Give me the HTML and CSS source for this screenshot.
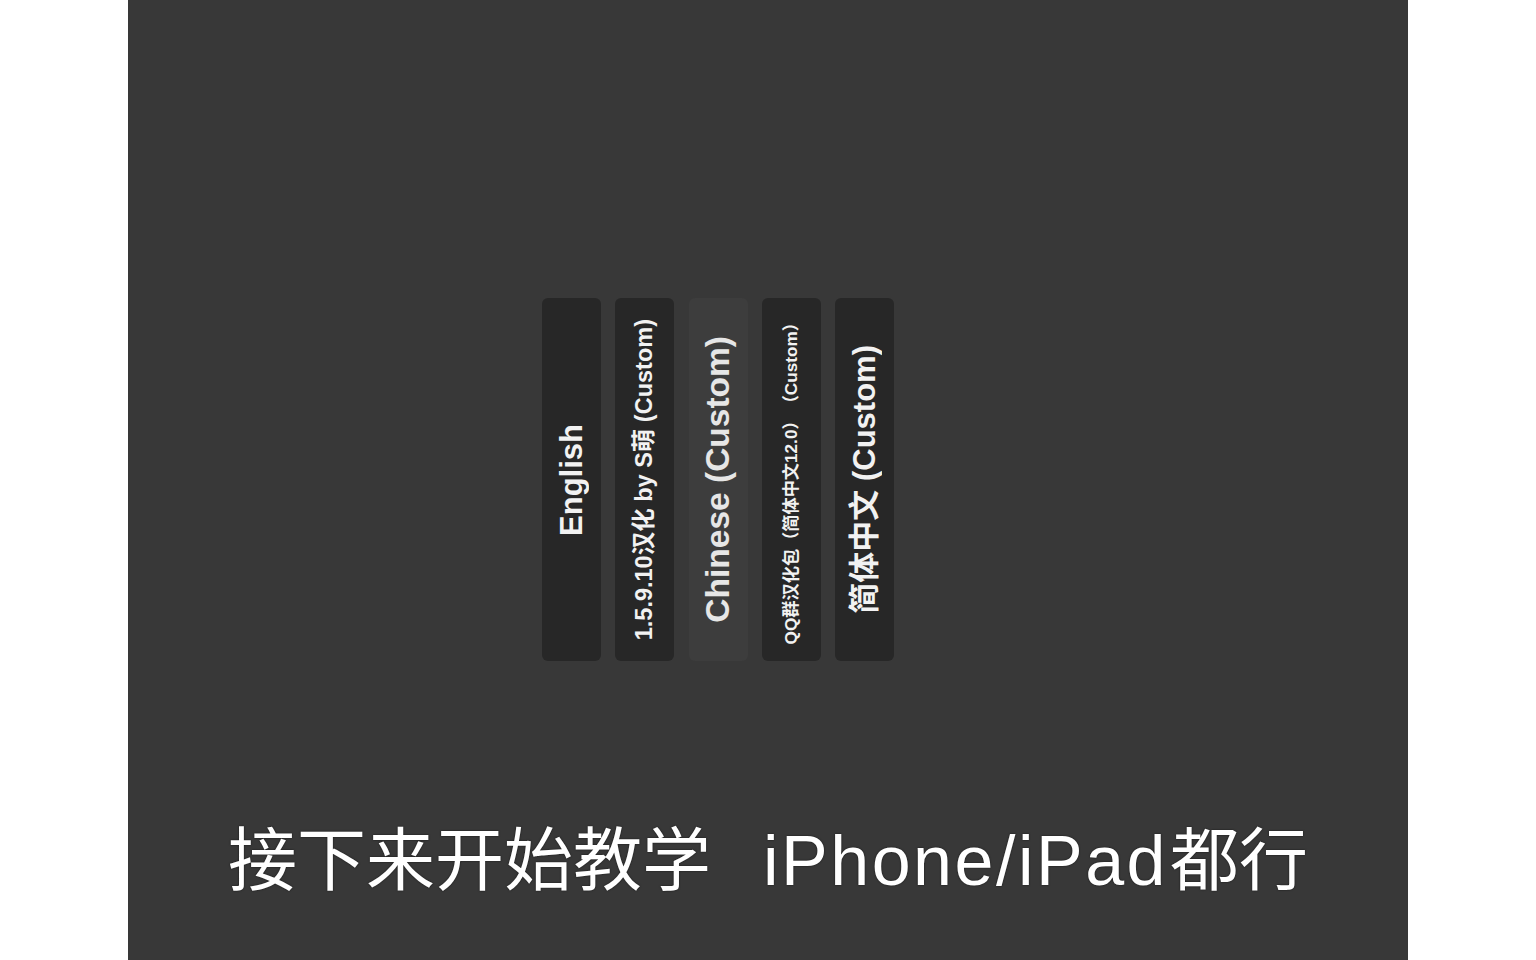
FILE: index.html
```html
<!DOCTYPE html>
<html lang="zh">
<head>
<meta charset="utf-8">
<title>Language</title>
<link rel="stylesheet" href="styles.css">
</head>
<body>
<div class="stage">
  <div class="langs">
    <div class="lang"><span class="label l-en">English</span></div>
    <div class="lang"><span class="label l-smeng">1.5.9.10汉化 by S萌 (Custom)</span></div>
    <div class="lang selected"><span class="label l-cn">Chinese (Custom)</span></div>
    <div class="lang"><span class="label l-qq">QQ群汉化包（简体中文12.0）（Custom）</span></div>
    <div class="lang"><span class="label l-jt">简体中文 (Custom)</span></div>
  </div>
  <div class="subtitle">接下来开始教学<span class="en">iPhone/iPad</span>都行</div>
</div>
</body>
</html>
```

FILE: styles.css
```css
html, body {
  margin: 0;
  padding: 0;
  background: #ffffff;
}
.stage {
  width: 1280px;
  height: 960px;
  margin: 0 auto;
  background: #383838;
  display: flex;
  flex-direction: column;
  align-items: center;
  box-sizing: border-box;
  padding-top: 298px;
  overflow: hidden;
}
.langs {
  display: flex;
  gap: 14.25px;
  align-self: flex-start;
  margin-left: 414px;
}
.lang {
  width: 59px;
  height: 363px;
  background: #272727;
  border-radius: 6px;
  display: flex;
  align-items: center;
  justify-content: center;
}
.lang.selected {
  background: #3d3d3d;
}
.label {
  writing-mode: vertical-rl;
  text-orientation: sideways;
  transform: rotate(180deg);
  font-family: "Liberation Sans", "Noto Sans CJK SC", sans-serif;
  font-weight: bold;
  color: #f2f2f2;
  white-space: nowrap;
  line-height: 1;
}
.l-en { font-size: 31px; }
.l-smeng { font-size: 23.5px; }
.l-cn { font-size: 33.5px; color: #e6e6e6; }
.l-qq { font-size: 17.2px; text-spacing-trim: space-all; }
.l-jt { font-size: 31px; }
.subtitle {
  margin-top: 160px;
  font-family: "Noto Sans CJK SC", sans-serif;
  font-size: 69px;
  line-height: 1;
  color: #ffffff;
  white-space: nowrap;
  text-shadow: 0 0 2px rgba(0, 0, 0, 0.7);
}
.subtitle .en {
  font-family: "Liberation Sans", "Noto Sans CJK SC", sans-serif;
  font-size: 70px;
  letter-spacing: 2.5px;
  margin-left: 52px;
  margin-right: 2px;
}
```
